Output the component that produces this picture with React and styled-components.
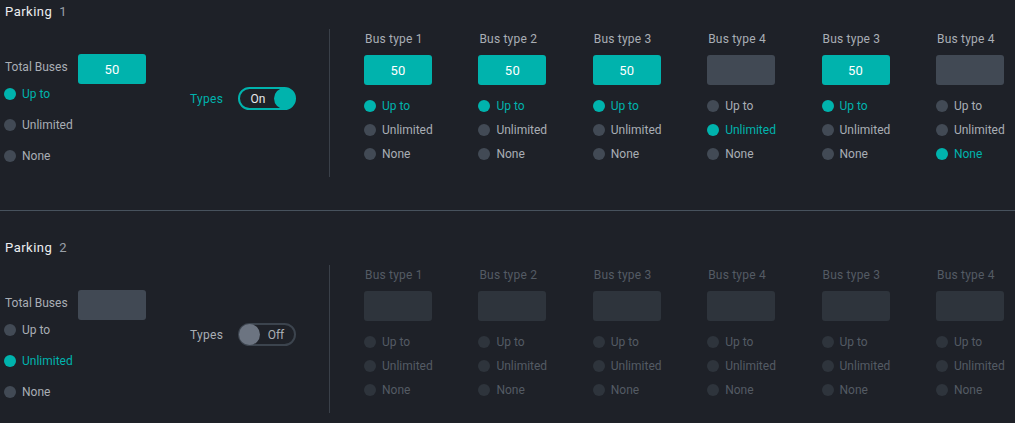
import React from "react";
import styled, { createGlobalStyle, css } from "styled-components";

const Global = createGlobalStyle`
  html, body { margin: 0; padding: 0; background: #1e2128; }
  body { font-family: Roboto, "Liberation Sans", sans-serif; }
  * { box-sizing: border-box; }
`;

const TEAL = "#00b3ad";

const Page = styled.div`
  background: #1e2128;
  width: 1015px;
  min-height: 423px;
  overflow: hidden;
`;

const Section = styled.section`
  padding: ${(p) => (p.$first ? "0" : "25px")} 0 ${(p) => (p.$last ? "10px" : "33px")} 4px;
  border-top: ${(p) => (p.$first ? "none" : "1px solid #47525d")};
`;

const Heading = styled.h2`
  margin: 0 0 5px 1px;
  height: 24px;
  line-height: 24px;
  font-size: 13px;
  font-weight: 400;
  letter-spacing: 0.5px;
  color: #eceef0;
`;

const HeadingNum = styled.span`
  margin-left: 7px;
  color: #9aa0a8;
`;

const Body = styled.div`
  display: flex;
  height: 148px;
`;

const LeftPanel = styled.div`
  width: 325px;
  display: flex;
  align-items: flex-start;
`;

const LeftCol = styled.div`
  width: 142px;
  padding-top: 25px;
`;

const TotalRow = styled.div`
  display: flex;
  align-items: center;
  height: 30px;
`;

const FieldLabel = styled.span`
  width: 74px;
  padding: 0 0 5px 1px;
  font-size: 12px;
  color: ${(p) => (p.$disabled ? "#545b64" : "#a9aeb5")};
  white-space: nowrap;
`;

const ValueBox = styled.div`
  width: 68px;
  height: 30px;
  border-radius: 3px;
  display: flex;
  align-items: center;
  justify-content: center;
  font-size: 13px;
  color: #ffffff;
  letter-spacing: 0.3px;
  background: ${(p) =>
    p.$filled ? TEAL : p.$disabled ? "#2e343c" : "#414954"};
`;

const RadioList = styled.div`
  display: flex;
  flex-direction: column;
  gap: ${(p) => p.$gap}px;
  margin-top: ${(p) => p.$top}px;
`;

const RadioRow = styled.div`
  display: flex;
  align-items: center;
  gap: 6px;
  height: 16px;
  font-size: 12px;
  white-space: nowrap;
  color: ${(p) =>
    p.$disabled ? "#545b64" : p.$checked ? TEAL : "#a9aeb5"};
`;

const Dot = styled.span`
  flex: none;
  width: 12px;
  height: 12px;
  border-radius: 50%;
  background: ${(p) =>
    p.$disabled ? "#2e343c" : p.$checked ? TEAL : "#424a55"};
`;

const TypesGroup = styled.div`
  margin: 58px 0 0 44px;
  display: flex;
  align-items: center;
  gap: 14px;
  height: 23px;
`;

const TypesLabel = styled.span`
  min-width: 34px;
  font-size: 12px;
  letter-spacing: 0.3px;
  color: ${(p) => (p.$on ? TEAL : "#a9aeb5")};
`;

const Toggle = styled.div`
  width: 58px;
  height: 23px;
  border-radius: 12px;
  border: 2px solid ${(p) => (p.$on ? TEAL : "#3c444e")};
  display: flex;
  flex-direction: ${(p) => (p.$on ? "row" : "row-reverse")};
  align-items: center;
`;

const ToggleText = styled.span`
  flex: 1;
  text-align: center;
  font-size: 12px;
  color: ${(p) => (p.$on ? "#e6e8ea" : "#a9aeb5")};
  ${(p) =>
    p.$on
      ? css`
          padding-left: 1px;
        `
      : css`
          padding-right: 1px;
        `}
`;

const Knob = styled.span`
  flex: none;
  width: 21px;
  height: 21px;
  margin: -1px;
  border-radius: 50%;
  background: ${(p) => (p.$on ? TEAL : "#6c7481")};
`;

const Divider = styled.div`
  width: 1px;
  background: #3a4049;
`;

const RightPanel = styled.div`
  flex: 1;
  display: flex;
  justify-content: space-between;
  padding: 2px 11px 0 34px;
`;

const BusCol = styled.div`
  width: 68px;
  display: flex;
  flex-direction: column;
`;

const BusLabel = styled.div`
  height: 16px;
  line-height: 16px;
  margin: 0 0 8px 1px;
  font-size: 12px;
  white-space: nowrap;
  letter-spacing: 0.2px;
  color: ${(p) => (p.$disabled ? "#545b64" : "#a9aeb5")};
`;

const MODES = [
  ["upto", "Up to"],
  ["unlimited", "Unlimited"],
  ["none", "None"],
];

function Radios({ mode, disabled, gap, top }) {
  return (
    <RadioList $gap={gap} $top={top}>
      {MODES.map(([key, label]) => {
        const checked = !disabled && mode === key;
        return (
          <RadioRow key={key} $checked={checked} $disabled={disabled}>
            <Dot $checked={checked} $disabled={disabled} />
            {label}
          </RadioRow>
        );
      })}
    </RadioList>
  );
}

function ParkingSection({ data, first, last }) {
  const disabled = !data.types;
  return (
    <Section $first={first} $last={last}>
      <Heading>
        Parking<HeadingNum>{data.id}</HeadingNum>
      </Heading>
      <Body>
        <LeftPanel>
          <LeftCol>
            <TotalRow>
              <FieldLabel>Total Buses</FieldLabel>
              <ValueBox $filled={!!data.total}>{data.total}</ValueBox>
            </TotalRow>
            <Radios mode={data.mode} gap={15} top={2} />
          </LeftCol>
          <TypesGroup>
            <TypesLabel $on={data.types}>Types</TypesLabel>
            <Toggle $on={data.types}>
              <ToggleText $on={data.types}>{data.types ? "On" : "Off"}</ToggleText>
              <Knob $on={data.types} />
            </Toggle>
          </TypesGroup>
        </LeftPanel>
        <Divider />
        <RightPanel>
          {data.buses.map((b, i) => (
            <BusCol key={i}>
              <BusLabel $disabled={disabled}>{b.name}</BusLabel>
              <ValueBox $filled={!disabled && !!b.value} $disabled={disabled}>
                {disabled ? "" : b.value}
              </ValueBox>
              <Radios mode={b.mode} disabled={disabled} gap={8} top={13} />
            </BusCol>
          ))}
        </RightPanel>
      </Body>
    </Section>
  );
}

const NAMES = ["Bus type 1", "Bus type 2", "Bus type 3", "Bus type 4", "Bus type 3", "Bus type 4"];

const parkings = [
  {
    id: 1,
    total: "50",
    mode: "upto",
    types: true,
    buses: [
      { name: NAMES[0], value: "50", mode: "upto" },
      { name: NAMES[1], value: "50", mode: "upto" },
      { name: NAMES[2], value: "50", mode: "upto" },
      { name: NAMES[3], value: "", mode: "unlimited" },
      { name: NAMES[4], value: "50", mode: "upto" },
      { name: NAMES[5], value: "", mode: "none" },
    ],
  },
  {
    id: 2,
    total: "",
    mode: "unlimited",
    types: false,
    buses: NAMES.map((name) => ({ name, value: "", mode: null })),
  },
];

export default function App() {
  return (
    <Page>
      <Global />
      {parkings.map((p, i) => (
        <ParkingSection
          key={p.id}
          data={p}
          first={i === 0}
          last={i === parkings.length - 1}
        />
      ))}
    </Page>
  );
}
